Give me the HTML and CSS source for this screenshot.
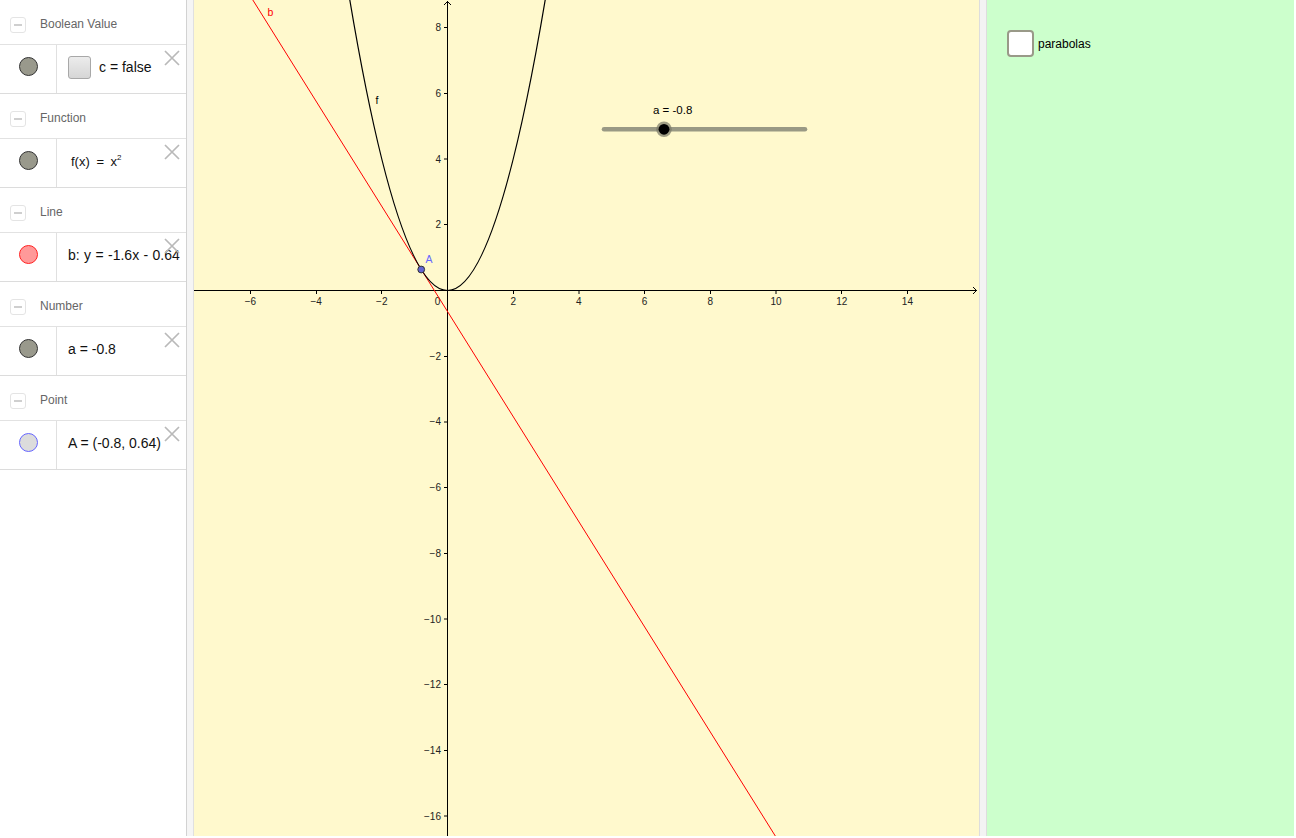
FILE: index.html
```html
<!DOCTYPE html>
<html>
<head>
<meta charset="utf-8">
<link rel="stylesheet" href="styles.css">
</head>
<body>
<div class="app">
  <div class="algebra">
    <div class="group-head"><span class="collapse"><span class="minus"></span></span><span class="group-title">Boolean Value</span></div>
    <div class="item">
      <div class="marble-cell"><span class="marble marble-grey"></span></div>
      <div class="item-body"><span class="bool-box"></span><span class="item-text">c = false</span></div>
      <svg class="del" viewBox="0 0 16 16"><path d="M1 1L15 15M15 1L1 15"/></svg>
    </div>
    <div class="group-head"><span class="collapse"><span class="minus"></span></span><span class="group-title">Function</span></div>
    <div class="item">
      <div class="marble-cell"><span class="marble marble-grey"></span></div>
      <div class="item-body item-body-fn"><span class="item-text fn-text">f(x) = x<sup>2</sup></span></div>
      <svg class="del" viewBox="0 0 16 16"><path d="M1 1L15 15M15 1L1 15"/></svg>
    </div>
    <div class="group-head"><span class="collapse"><span class="minus"></span></span><span class="group-title">Line</span></div>
    <div class="item">
      <div class="marble-cell"><span class="marble marble-red"></span></div>
      <div class="item-body"><span class="item-text line-text">b: y = -1.6x - 0.64</span></div>
      <svg class="del" viewBox="0 0 16 16"><path d="M1 1L15 15M15 1L1 15"/></svg>
    </div>
    <div class="group-head"><span class="collapse"><span class="minus"></span></span><span class="group-title">Number</span></div>
    <div class="item">
      <div class="marble-cell"><span class="marble marble-grey"></span></div>
      <div class="item-body"><span class="item-text">a = -0.8</span></div>
      <svg class="del" viewBox="0 0 16 16"><path d="M1 1L15 15M15 1L1 15"/></svg>
    </div>
    <div class="group-head"><span class="collapse"><span class="minus"></span></span><span class="group-title">Point</span></div>
    <div class="item">
      <div class="marble-cell"><span class="marble marble-point"></span></div>
      <div class="item-body"><span class="item-text">A = (-0.8, 0.64)</span></div>
      <svg class="del" viewBox="0 0 16 16"><path d="M1 1L15 15M15 1L1 15"/></svg>
    </div>
  </div>
  <div class="splitter-left"></div>
  <div class="graphics">
    <svg class="canvas" width="785" height="836" viewBox="0 0 785 836">
      <g class="axes">
        <line x1="0" y1="290.5" x2="783" y2="290.5"/>
        <line x1="253.5" y1="1" x2="253.5" y2="836"/>
        <polyline class="arrow" points="250,5 253.5,1.5 257,5"/>
        <polyline class="arrow" points="779,287 782.5,290.5 779,294"/>
        <line x1="56.5" y1="290.5" x2="56.5" y2="294"/>
        <line x1="122.5" y1="290.5" x2="122.5" y2="294"/>
        <line x1="187.5" y1="290.5" x2="187.5" y2="294"/>
        <line x1="319.5" y1="290.5" x2="319.5" y2="294"/>
        <line x1="385" y1="290.5" x2="385" y2="294"/>
        <line x1="450.5" y1="290.5" x2="450.5" y2="294"/>
        <line x1="516.5" y1="290.5" x2="516.5" y2="294"/>
        <line x1="582" y1="290.5" x2="582" y2="294"/>
        <line x1="647.5" y1="290.5" x2="647.5" y2="294"/>
        <line x1="713.5" y1="290.5" x2="713.5" y2="294"/>
        <line x1="250" y1="27.5" x2="253.5" y2="27.5"/>
        <line x1="250" y1="93.5" x2="253.5" y2="93.5"/>
        <line x1="250" y1="159" x2="253.5" y2="159"/>
        <line x1="250" y1="224.5" x2="253.5" y2="224.5"/>
        <line x1="250" y1="356.5" x2="253.5" y2="356.5"/>
        <line x1="250" y1="422" x2="253.5" y2="422"/>
        <line x1="250" y1="487.5" x2="253.5" y2="487.5"/>
        <line x1="250" y1="553.5" x2="253.5" y2="553.5"/>
        <line x1="250" y1="619" x2="253.5" y2="619"/>
        <line x1="250" y1="684.5" x2="253.5" y2="684.5"/>
        <line x1="250" y1="750.5" x2="253.5" y2="750.5"/>
        <line x1="250" y1="816" x2="253.5" y2="816"/>
      </g>
      <g class="xlabels">
        <text x="56.4" y="305">−6</text>
        <text x="122.1" y="305">−4</text>
        <text x="187.8" y="305">−2</text>
        <text x="319.2" y="305">2</text>
        <text x="384.9" y="305">4</text>
        <text x="450.6" y="305">6</text>
        <text x="516.3" y="305">8</text>
        <text x="582" y="305">10</text>
        <text x="647.7" y="305">12</text>
        <text x="713.4" y="305">14</text>
        <text x="243.5" y="305">0</text>
      </g>
      <g class="ylabels">
        <text x="247" y="31.2">8</text>
        <text x="247" y="96.9">6</text>
        <text x="247" y="162.6">4</text>
        <text x="247" y="228.3">2</text>
        <text x="247" y="359.7">−2</text>
        <text x="247" y="425.4">−4</text>
        <text x="247" y="491.1">−6</text>
        <text x="247" y="556.8">−8</text>
        <text x="247" y="622.5">−10</text>
        <text x="247" y="688.2">−12</text>
        <text x="247" y="753.9">−14</text>
        <text x="247" y="819.6">−16</text>
      </g>
      <line class="line-b" x1="-9.3" y1="-109" x2="647.7" y2="942.2"/>
      <text class="lbl-b" x="73.5" y="15.5">b</text>
      <path class="curve-f" d="M154.95,-5.15 Q253.5,586.15 352.05,-5.15"/>
      <text class="lbl-f" x="181.5" y="103.5">f</text>
      <circle class="pt-a" cx="227.2" cy="269.5" r="3.4"/>
      <text class="lbl-a" x="231.5" y="263">A</text>
      <line class="slider-track" x1="410" y1="129.3" x2="611" y2="129.3"/>
      <circle class="slider-halo" cx="470" cy="129.3" r="7.8"/>
      <circle class="slider-knob" cx="470" cy="129.3" r="5.4"/>
      <text class="slider-label" x="459" y="114">a = -0.8</text>
    </svg>
  </div>
  <div class="splitter-right"></div>
  <div class="side">
    <label class="check-row"><span class="check-box"></span><span class="check-label">parabolas</span></label>
  </div>
</div>
</body>
</html>
```
FILE: styles.css
```css
html, body {
  margin: 0;
  padding: 0;
  background: #ffffff;
}
body {
  font-family: "Liberation Sans", Arial, sans-serif;
  width: 1296px;
  height: 838px;
  overflow: hidden;
}
.app {
  display: flex;
  width: 1294px;
  height: 836px;
}
.algebra {
  width: 186px;
  border-right: 1px solid #d2d2d2;
  background: #ffffff;
  overflow: hidden;
  flex: none;
}
.group-head {
  height: 40px;
  padding-top: 4px;
  padding-left: 10px;
  border-bottom: 1px solid #e2e2e2;
  display: flex;
  align-items: center;
}
.collapse {
  width: 14px;
  height: 14px;
  border: 1px solid #e4e4e4;
  border-radius: 3px;
  display: flex;
  align-items: center;
  justify-content: center;
  flex: none;
  position: relative;
  top: 1px;
}
.minus {
  width: 8px;
  height: 2px;
  background: #cfcfcf;
}
.group-title {
  margin-left: 14px;
  font-size: 12px;
  color: #666666;
}
.item {
  position: relative;
  display: flex;
  height: 48px;
  border-bottom: 1px solid #dcdcdc;
}
.marble-cell {
  border-right: 1px solid #e0e0e0;
  display: flex;
  justify-content: center;
  align-items: flex-start;
  padding-top: 12px;
  box-sizing: border-box;
  width: 57px;
  flex: none;
}
.marble {
  width: 17px;
  height: 17px;
  border-radius: 50%;
  border: 1px solid #333333;
  display: block;
}
.marble-grey {
  background: #99998c;
}
.marble-red {
  background: #ff9999;
  border-color: #ff2222;
}
.marble-point {
  background: #dcdcdc;
  border-color: #6666ff;
}
.item-body {
  height: 44px;
  display: flex;
  align-items: center;
  padding-left: 11px;
  white-space: nowrap;
  overflow: hidden;
}
.item-body-fn {
  padding-left: 14px;
}
.item-text {
  font-size: 14px;
  color: #111111;
}
.fn-text {
  font-size: 13px;
  word-spacing: 3px;
}
.fn-text sup {
  font-size: 8px;
  vertical-align: 6px;
  line-height: 0;
}
.line-text {
  word-spacing: 0.5px;
}
.bool-box {
  width: 21px;
  height: 21px;
  border: 1px solid #a8a8a8;
  border-radius: 3px;
  background: linear-gradient(#ececec, #d6d6d6);
  margin-right: 8px;
  flex: none;
}
.del {
  position: absolute;
  right: 6px;
  top: 5px;
  width: 16px;
  height: 16px;
}
.del path {
  stroke: #b9b9b9;
  stroke-width: 1.7;
  fill: none;
}
.splitter-left {
  width: 6px;
  background: #f5f5f5;
  border-right: 1px solid #e0e0e0;
  flex: none;
}
.graphics {
  width: 785px;
  height: 836px;
  background: #fff9cd;
  flex: none;
  overflow: hidden;
}
.canvas {
  display: block;
}
.axes line, .axes polyline {
  stroke: #000000;
  stroke-width: 1;
  fill: none;
}
.xlabels text, .ylabels text {
  font-family: "Liberation Sans", Arial, sans-serif;
  font-size: 10px;
  fill: #222222;
}
.xlabels text {
  text-anchor: middle;
}
.ylabels text {
  text-anchor: end;
}
.line-b {
  stroke: #ff0000;
  stroke-width: 1;
}
.curve-f {
  stroke: #000000;
  stroke-width: 1.2;
  fill: none;
}
.lbl-b, .lbl-f, .lbl-a {
  font-family: "Liberation Sans", Arial, sans-serif;
  font-size: 10.5px;
}
.lbl-b {
  fill: #ff0000;
}
.lbl-f {
  fill: #000000;
}
.lbl-a {
  fill: #6666ff;
}
.pt-a {
  fill: #6464d2;
  stroke: #333333;
  stroke-width: 1;
}
.slider-track {
  stroke: #999984;
  stroke-width: 4.5;
  stroke-linecap: round;
}
.slider-halo {
  fill: #777766;
  opacity: 0.7;
}
.slider-knob {
  fill: #000000;
}
.slider-label {
  font-family: "Liberation Sans", Arial, sans-serif;
  font-size: 11.5px;
  fill: #000000;
}
.splitter-right {
  width: 6px;
  background: #f3f3f3;
  border-left: 1px solid #dddddd;
  border-right: 1px solid #dddddd;
  flex: none;
}
.side {
  width: 307px;
  background: #ccffcc;
  flex: none;
  padding: 30px 0 0 20px;
  box-sizing: border-box;
}
.check-row {
  display: flex;
  align-items: center;
}
.check-box {
  width: 23px;
  height: 23px;
  border: 2px solid #999988;
  border-radius: 4px;
  background: #ffffff;
  flex: none;
}
.check-label {
  margin-left: 4px;
  font-size: 12px;
  color: #000000;
}
```
